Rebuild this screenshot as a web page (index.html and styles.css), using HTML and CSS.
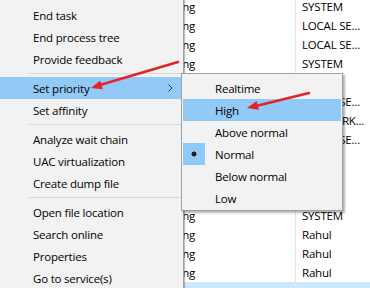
FILE: index.html
```html
<!DOCTYPE html>
<html lang="en">
<head>
  <meta charset="UTF-8">
  <title>Set priority</title>
  <link rel="stylesheet" href="styles.css">
</head>
<body>

  <div class="screen">
    <!-- process list behind the menus -->
    <div class="list">
      <div class="row"><span class="status">Running</span><span class="user">SYSTEM</span></div>
      <div class="row"><span class="status">Running</span><span class="user">LOCAL SE...</span></div>
      <div class="row"><span class="status">Running</span><span class="user">LOCAL SE...</span></div>
      <div class="row"><span class="status">Running</span><span class="user">SYSTEM</span></div>
      <div class="row"><span class="status">Running</span><span class="user">SYSTEM</span></div>
      <div class="row"><span class="status">Running</span><span class="user">LOCAL SE...</span></div>
      <div class="row"><span class="status">Running</span><span class="user">NETWORK...</span></div>
      <div class="row"><span class="status">Running</span><span class="user">LOCAL SE...</span></div>
      <div class="row"><span class="status">Running</span><span class="user">Rahul</span></div>
      <div class="row"><span class="status">Running</span><span class="user">Rahul</span></div>
      <div class="row"><span class="status">Running</span><span class="user">Rahul</span></div>
      <div class="row"><span class="status">Running</span><span class="user">SYSTEM</span></div>
      <div class="row"><span class="status">Running</span><span class="user">Rahul</span></div>
      <div class="row"><span class="status">Running</span><span class="user">Rahul</span></div>
      <div class="row"><span class="status">Running</span><span class="user">Rahul</span></div>
      <div class="row selected"><span class="status">Running</span><span class="user">Rahul</span></div>
    </div>

    <!-- context menu -->
    <div class="menu">
      <div class="item">End task</div>
      <div class="item">End process tree</div>
      <div class="item">Provide feedback</div>
      <div class="sep"></div>
      <div class="item active">Set priority
        <svg class="chevron" width="5" height="8" viewBox="0 0 5 8"><path d="M0.5 0.5L4 4L0.5 7.5" fill="none" stroke="#333" stroke-width="1"/></svg>
      </div>
      <div class="item">Set affinity</div>
      <div class="sep"></div>
      <div class="item">Analyze wait chain</div>
      <div class="item">UAC virtualization</div>
      <div class="item">Create dump file</div>
      <div class="sep"></div>
      <div class="item">Open file location</div>
      <div class="item">Search online</div>
      <div class="item">Properties</div>
      <div class="item">Go to service(s)</div>
    </div>

    <!-- priority submenu -->
    <div class="submenu">
      <div class="item"><span class="check"></span>Realtime</div>
      <div class="item active"><span class="check"></span>High</div>
      <div class="item"><span class="check"></span>Above normal</div>
      <div class="item"><span class="check checked"></span>Normal</div>
      <div class="item"><span class="check"></span>Below normal</div>
      <div class="item"><span class="check"></span>Low</div>
    </div>

    <!-- red annotation arrows -->
    <svg class="arrows" width="370" height="288" viewBox="0 0 370 288">
      <line x1="178" y1="62" x2="100" y2="85" stroke="#e2232a" stroke-width="2.5" stroke-linecap="round"/>
      <polygon points="91,88 102.8,89.2 100.2,80.6" fill="#e2232a"/>
      <line x1="309" y1="93" x2="256" y2="106" stroke="#e2232a" stroke-width="2.5" stroke-linecap="round"/>
      <polygon points="247,108 258.8,109.8 256.6,101" fill="#e2232a"/>
    </svg>
  </div>

</body>
</html>
```

FILE: styles.css
```css
body {
  margin: 0;
  font-family: "Open Sans", "Noto Sans", sans-serif;
  font-size: 11.5px;
  letter-spacing: -0.2px;
  color: #000;
  background-color: #fff;
}

.screen {
  position: relative;
  width: 370px;
  height: 288px;
  overflow: hidden;
}

/* background process list */
.list {
  margin-top: -3px;
}

.row {
  display: grid;
  grid-template-columns: 295px 1fr;
  height: 19px;
  line-height: 19px;
}

.row.selected {
  background-color: #cce8ff;
}

.status {
  padding-left: 152px;
}

.user {
  border-left: 1px solid #e5e5e5;
  padding-left: 6px;
}

/* main context menu */
.menu {
  position: absolute;
  left: 0;
  top: 0;
  width: 181px;
  height: 300px;
  padding: 4px 2px 0 0;
  background-color: #f2f2f2;
  border-right: 1px solid #a0a0a0;
  box-shadow: 1px 0 1px rgba(0,0,0,0.25);
}

.item {
  display: flex;
  align-items: center;
  height: 22px;
  padding-left: 33px;
  white-space: nowrap;
}

.item.active {
  background-color: #91c9f7;
}

.chevron {
  margin-left: auto;
  margin-right: 8px;
}

.sep {
  height: 1px;
  margin: 3px 0 3px 29px;
  background-color: #d7d7d7;
}

/* priority submenu */
.submenu {
  position: absolute;
  left: 181px;
  top: 73px;
  width: 158px;
  padding: 3px 1px 1px 1px;
  background-color: #f2f2f2;
  border: 1px solid #a0a0a0;
  box-shadow: 2px 2px 2px rgba(0,0,0,0.3);
}

.submenu .item {
  padding-left: 0;
}

.check {
  width: 22px;
  height: 22px;
  margin-right: 10px;
}

.check.checked {
  background-color: #91c9f7;
  background-image: radial-gradient(circle at 11px 11px, #222 2.2px, transparent 2.8px);
}

.arrows {
  position: absolute;
  left: 0;
  top: 0;
  pointer-events: none;
}
```
